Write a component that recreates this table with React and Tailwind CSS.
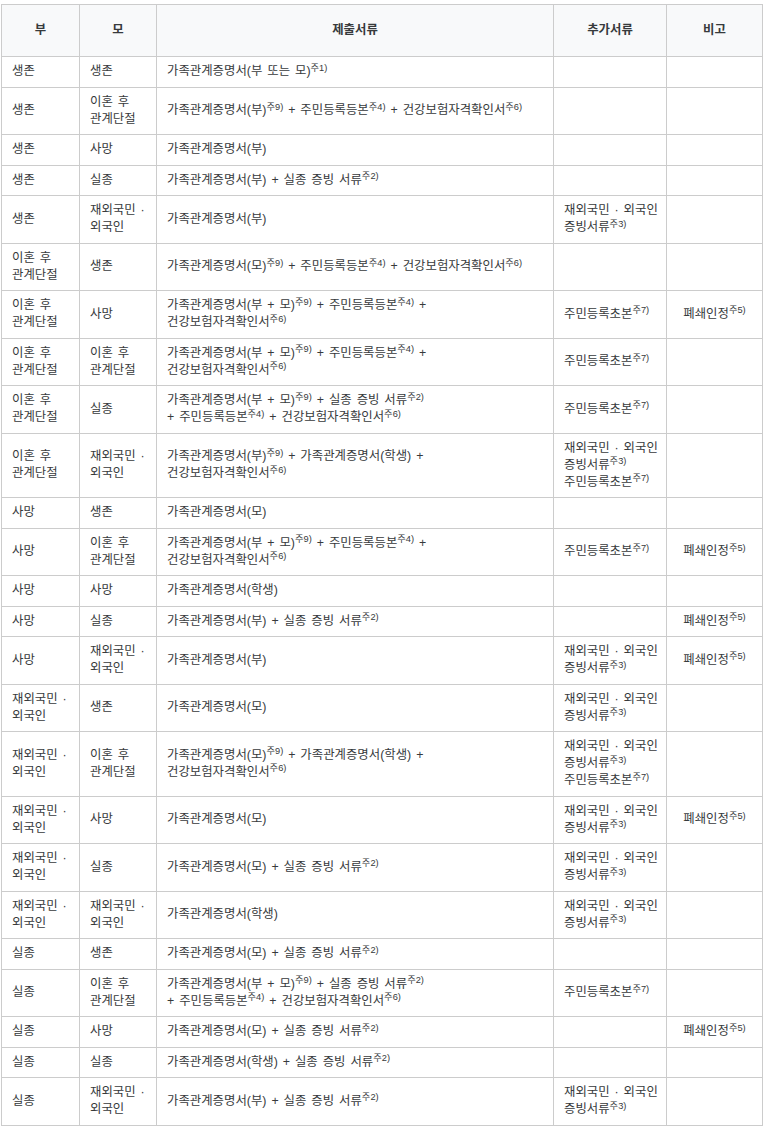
import React from "react";

// ^...^ marks a footnote (superscript), \n is a line break
const rows = [
  ["생존", "생존", "가족관계증명서(부 또는 모)^주1)^", "", ""],
  ["생존", "이혼 후\n관계단절", "가족관계증명서(부)^주9)^ + 주민등록등본^주4)^ + 건강보험자격확인서^주6)^", "", ""],
  ["생존", "사망", "가족관계증명서(부)", "", ""],
  ["생존", "실종", "가족관계증명서(부) + 실종 증빙 서류^주2)^", "", ""],
  ["생존", "재외국민 ·\n외국인", "가족관계증명서(부)", "재외국민 · 외국인\n증빙서류^주3)^", ""],
  ["이혼 후\n관계단절", "생존", "가족관계증명서(모)^주9)^ + 주민등록등본^주4)^ + 건강보험자격확인서^주6)^", "", ""],
  ["이혼 후\n관계단절", "사망", "가족관계증명서(부 + 모)^주9)^ + 주민등록등본^주4)^ +\n건강보험자격확인서^주6)^", "주민등록초본^주7)^", "폐쇄인정^주5)^"],
  ["이혼 후\n관계단절", "이혼 후\n관계단절", "가족관계증명서(부 + 모)^주9)^ + 주민등록등본^주4)^ +\n건강보험자격확인서^주6)^", "주민등록초본^주7)^", ""],
  ["이혼 후\n관계단절", "실종", "가족관계증명서(부 + 모)^주9)^ + 실종 증빙 서류^주2)^\n+ 주민등록등본^주4)^ + 건강보험자격확인서^주6)^", "주민등록초본^주7)^", ""],
  ["이혼 후\n관계단절", "재외국민 ·\n외국인", "가족관계증명서(부)^주9)^ + 가족관계증명서(학생) +\n건강보험자격확인서^주6)^", "재외국민 · 외국인\n증빙서류^주3)^\n주민등록초본^주7)^", ""],
  ["사망", "생존", "가족관계증명서(모)", "", ""],
  ["사망", "이혼 후\n관계단절", "가족관계증명서(부 + 모)^주9)^ + 주민등록등본^주4)^ +\n건강보험자격확인서^주6)^", "주민등록초본^주7)^", "폐쇄인정^주5)^"],
  ["사망", "사망", "가족관계증명서(학생)", "", ""],
  ["사망", "실종", "가족관계증명서(부) + 실종 증빙 서류^주2)^", "", "폐쇄인정^주5)^"],
  ["사망", "재외국민 ·\n외국인", "가족관계증명서(부)", "재외국민 · 외국인\n증빙서류^주3)^", "폐쇄인정^주5)^"],
  ["재외국민 ·\n외국인", "생존", "가족관계증명서(모)", "재외국민 · 외국인\n증빙서류^주3)^", ""],
  ["재외국민 ·\n외국인", "이혼 후\n관계단절", "가족관계증명서(모)^주9)^ + 가족관계증명서(학생) +\n건강보험자격확인서^주6)^", "재외국민 · 외국인\n증빙서류^주3)^\n주민등록초본^주7)^", ""],
  ["재외국민 ·\n외국인", "사망", "가족관계증명서(모)", "재외국민 · 외국인\n증빙서류^주3)^", "폐쇄인정^주5)^"],
  ["재외국민 ·\n외국인", "실종", "가족관계증명서(모) + 실종 증빙 서류^주2)^", "재외국민 · 외국인\n증빙서류^주3)^", ""],
  ["재외국민 ·\n외국인", "재외국민 ·\n외국인", "가족관계증명서(학생)", "재외국민 · 외국인\n증빙서류^주3)^", ""],
  ["실종", "생존", "가족관계증명서(모) + 실종 증빙 서류^주2)^", "", ""],
  ["실종", "이혼 후\n관계단절", "가족관계증명서(부 + 모)^주9)^ + 실종 증빙 서류^주2)^\n+ 주민등록등본^주4)^ + 건강보험자격확인서^주6)^", "주민등록초본^주7)^", ""],
  ["실종", "사망", "가족관계증명서(모) + 실종 증빙 서류^주2)^", "", "폐쇄인정^주5)^"],
  ["실종", "실종", "가족관계증명서(학생) + 실종 증빙 서류^주2)^", "", ""],
  ["실종", "재외국민 ·\n외국인", "가족관계증명서(부) + 실종 증빙 서류^주2)^", "재외국민 · 외국인\n증빙서류^주3)^", ""],
];

const Rich = ({ text }) => {
  const lines = text.split("\n");
  return lines.map((line, i) => (
    <React.Fragment key={i}>
      {i > 0 && <br />}
      {line.split("^").map((part, j) =>
        j % 2 === 1 ? <sup key={j}>{part}</sup> : <React.Fragment key={j}>{part}</React.Fragment>
      )}
    </React.Fragment>
  ));
};

const headers = ["부", "모", "제출서류", "추가서류", "비고"];

const App = () => {
  return (
    <div className="bg-white min-h-screen pt-[4px] pl-[1px] text-[#373a3c] text-[12.4px] leading-[17px] [word-spacing:1.5px] font-['Liberation_Sans','Noto_Sans_CJK_KR',sans-serif]">
      <table className="table-fixed border-collapse w-[761px]">
        <colgroup>
          <col className="w-[78px]" />
          <col className="w-[77px]" />
          <col className="w-[397px]" />
          <col className="w-[113px]" />
          <col className="w-[96px]" />
        </colgroup>
        <thead>
          <tr className="h-[52px] bg-[#f8f9fa]">
            {headers.map((h) => (
              <th key={h} className="border border-[#cccccc] px-[10px] text-center font-bold">
                {h}
              </th>
            ))}
          </tr>
        </thead>
        <tbody>
          {rows.map((row, i) => (
            <tr key={i}>
              {row.map((cell, j) => (
                <td
                  key={j}
                  className={
                    "border border-[#cccccc] px-[10px] py-[6.25px] align-middle whitespace-nowrap " +
                    (j === 4 ? "text-center" : "text-left")
                  }
                >
                  <Rich text={cell} />
                </td>
              ))}
            </tr>
          ))}
        </tbody>
      </table>
    </div>
  );
};

export default App;
